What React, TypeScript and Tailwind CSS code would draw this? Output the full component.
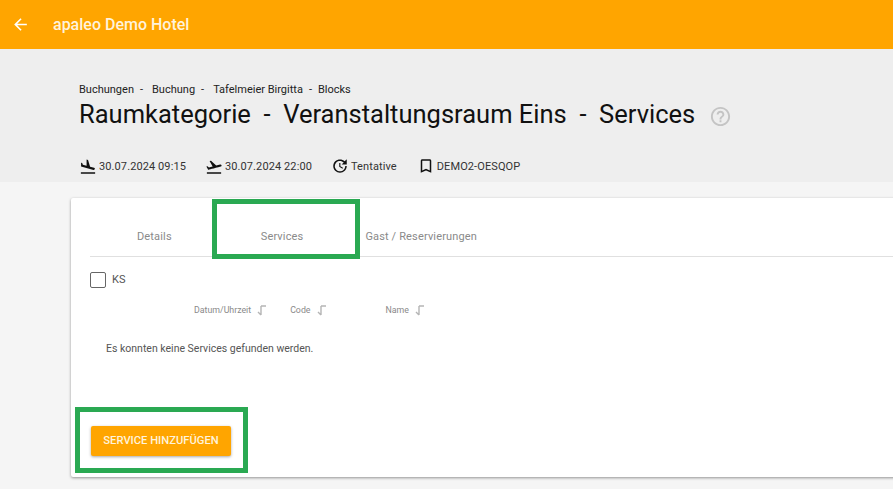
import React from "react";
import {
  MdArrowBack,
  MdBookmarkBorder,
  MdFlightLand,
  MdFlightTakeoff,
  MdHelpOutline,
  MdUpdate,
} from "react-icons/md";

const SortIcon = () => (
  <svg width="10" height="11" viewBox="0 0 10 11" className="ml-[5px] text-[#b5b5b5]">
    <path d="M5 1v9M5 10L2 7M5 1H10" fill="none" stroke="currentColor" strokeWidth="1.4" />
  </svg>
);

const Meta = ({ icon, label }: { icon: React.ReactNode; label: string }) => (
  <div className="flex items-center gap-[2px]">
    {icon}
    <span className="text-[11px] leading-4 tracking-[0.1px] text-[#333333]">{label}</span>
  </div>
);

export default function App() {
  return (
    <div className="relative h-[489px] w-[893px] overflow-hidden bg-[#f5f5f5] font-['Roboto',sans-serif]">
      <header className="flex h-[49px] items-center bg-[#ffa500] pl-[11px] text-white">
        <MdArrowBack size={19} />
        <span className="ml-[23px] text-[16px] font-medium text-[#fff3dc]">apaleo Demo Hotel</span>
      </header>

      <section className="h-[133px] bg-[#eeeeee] pl-[79px] pt-[33px]">
        <div className="flex h-[14px] translate-y-px items-center text-[11px] text-[#222222]">
          <span>Buchungen</span>
          <span className="ml-[6px]">-</span>
          <span className="ml-[9px]">Buchung</span>
          <span className="ml-[6px]">-</span>
          <span className="ml-[9px]">Tafelmeier Birgitta</span>
          <span className="ml-[6px]">-</span>
          <span className="ml-[6px]">Blocks</span>
        </div>
        <div className="mt-[3px] flex h-[30px] items-center">
          <h1 className="whitespace-pre text-[25.5px] font-normal text-[#111111]">
            Raumkategorie  -  Veranstaltungsraum Eins  -  Services
          </h1>
          <MdHelpOutline size={23} className="ml-[14px] mt-[5px] text-[#c4c4c4]" />
        </div>
        <div className="mt-[29px] flex items-center">
          <Meta icon={<MdFlightLand size={18} className="text-[#111111]" />} label="30.07.2024 09:15" />
          <div className="ml-[19px]">
            <Meta icon={<MdFlightTakeoff size={18} className="text-[#111111]" />} label="30.07.2024 22:00" />
          </div>
          <div className="ml-[19px]">
            <Meta icon={<MdUpdate size={18} className="-mt-[2px] text-[#111111]" />} label="Tentative" />
          </div>
          <div className="ml-[20px]">
            <Meta icon={<MdBookmarkBorder size={18} className="-mt-[2px] text-[#111111]" />} label="DEMO2-OESQOP" />
          </div>
        </div>
      </section>

      <main className="ml-[71px] mt-[16px] h-[279px] w-[900px] rounded-[2px] bg-white pl-[19px] pt-[19px] shadow-[0_1px_3px_rgba(0,0,0,0.4)]">
        <nav className="flex h-[40px] items-center border-b border-[#e0e0e0] pt-[2px] text-[11px] tracking-[0.15px] text-[#8a8a8a]">
          <span className="ml-[47px]">Details</span>
          <span className="ml-[89px]">Services</span>
          <span className="ml-[62px]">Gast / Reservierungen</span>
        </nav>

        <div className="mt-[15px] flex items-center">
          <div className="h-[16px] w-[16px] rounded-[2px] border border-[#666666] bg-white" />
          <span className="ml-[6px] text-[11px] text-[#555555]">KS</span>
        </div>

        <div className="mt-[16px] flex h-[12px] items-center text-[8.8px] text-[#8a8a8a]">
          <span className="ml-[104px]">Datum/Uhrzeit</span>
          <SortIcon />
          <span className="ml-[24px]">Code</span>
          <SortIcon />
          <span className="ml-[60px]">Name</span>
          <SortIcon />
        </div>

        <p className="ml-[16px] mt-[24px] text-[10.5px] text-[#555555]">Es konnten keine Services gefunden werden.</p>

        <button className="ml-px mt-[70px] flex h-[30px] w-[140px] items-center justify-center rounded-[2px] bg-[#ffa500] text-[11.2px] font-medium text-[#fff3dc] shadow-[0_1px_3px_rgba(0,0,0,0.35)]">
          SERVICE HINZUFÜGEN
        </button>
      </main>

      {/* highlight boxes drawn over the screenshot */}
      <div className="absolute left-[212px] top-[199px] h-[60px] w-[148px] border-[5px] border-[#2aa952]" />
      <div className="absolute left-[75px] top-[407px] h-[66px] w-[173px] border-[5px] border-[#2aa952]" />
    </div>
  );
}
